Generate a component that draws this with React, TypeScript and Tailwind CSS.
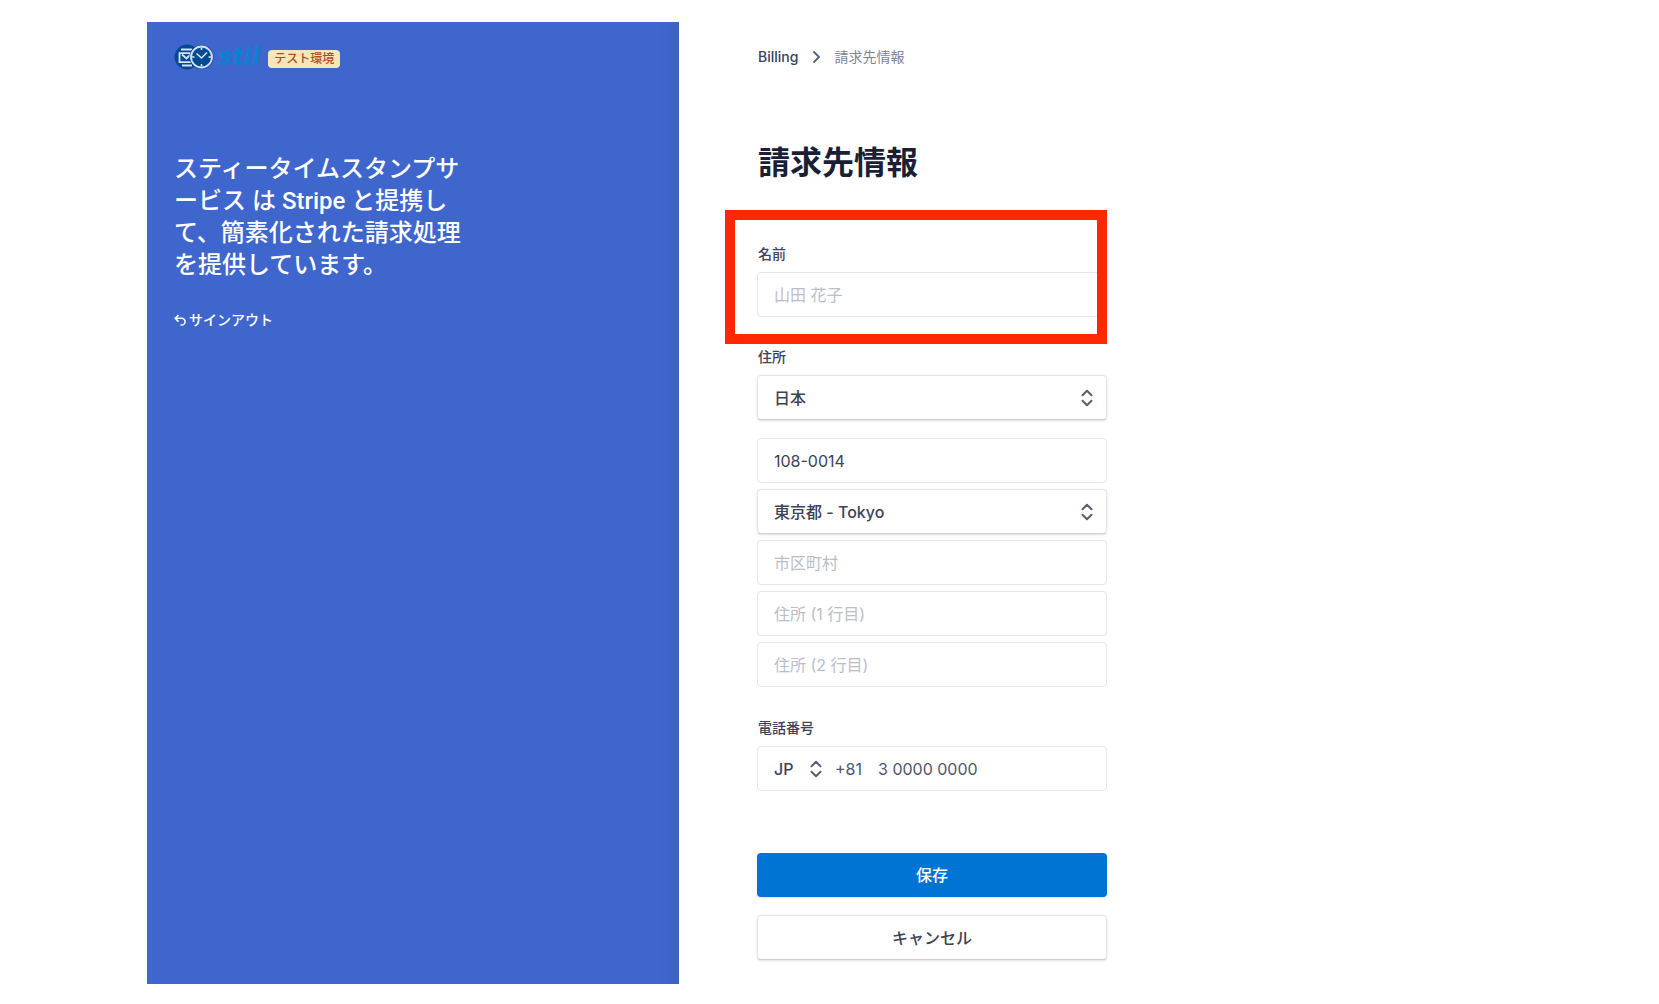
import * as React from "react"

const controlClass =
  "block h-[45px] w-full rounded border border-[#e6e6e6] bg-white px-4 text-base text-[#3c4257] outline-none placeholder:text-[#b9bec9]"
const labelClass = "block pl-px text-sm font-medium leading-5 text-[#3c4257]"

function ChevronUpDown({ className }: { className?: string }) {
  return (
    <svg
      className={className}
      width="12"
      height="18"
      viewBox="0 0 12 18"
      fill="none"
      stroke="#5a6073"
      strokeWidth={2}
      strokeLinecap="round"
      strokeLinejoin="round"
      aria-hidden="true"
    >
      <path d="M1.500 6.200L6 1.700l4.500 4.500M1.500 11.800L6 16.300l4.500-4.500" />
    </svg>
  )
}

function Logo() {
  return (
    <div className="flex items-center gap-1">
      <svg width="40" height="26" viewBox="0 0 40 26" fill="none" aria-hidden="true">
        <circle cx="13" cy="13" r="12.500" fill="#034a94" />
        <g stroke="#d6e2f2" strokeWidth={1.800}>
          <path d="M7 5.500h11M8 21.500h10" />
          <path d="M17 9.200H5.500v9H17" />
          <path d="M8 10.500l4.500 4 4.500-4.500" />
        </g>
        <circle cx="27.500" cy="13" r="12" fill="#034a94" />
        <circle cx="27.500" cy="13" r="10.500" stroke="#d6e2f2" strokeWidth={1.800} />
        <path
          d="M22.500 9.500l5 4.500 5.500-5.500M27.500 3.500v2.500M27.500 20v2.500M18 13h2.500M34.500 13h2.500"
          stroke="#d6e2f2"
          strokeWidth={1.600}
        />
      </svg>
      <span className="font-['DejaVu_Sans',sans-serif] text-2xl font-bold italic leading-6 text-[#0d80cf]">
        stii
      </span>
    </div>
  )
}

function SelectField({
  id,
  label,
  value,
}: {
  id: string
  label?: string
  value: string
}) {
  return (
    <div className="relative">
      <select
        id={id}
        aria-label={label}
        className={`${controlClass} appearance-none border-b-[#cfcfcf] font-medium shadow-sm`}
      >
        <option>{value}</option>
      </select>
      <ChevronUpDown className="pointer-events-none absolute right-[14px] top-[14px]" />
    </div>
  )
}

function Sidebar() {
  return (
    <aside className="bg-[#3f66cd] bg-[linear-gradient(to_left,#3b62c4,#3f66cd_20px)] px-[27px] pt-[22px] text-white">
      <div className="flex items-center gap-2">
        <Logo />
        <span className="mt-1 rounded bg-[#f8e5b9] px-1.5 text-xs font-medium leading-[18px] text-[#a8501e]">
          テスト環境
        </span>
      </div>
      <p className="mt-[83px] w-[290px] break-all font-['Roboto','Noto_Sans_CJK_JP',sans-serif] text-2xl font-medium leading-8">
        スティータイムスタンプサービス は Stripe と提携して、簡素化された請求処理を提供しています。
      </p>
      <a
        href="#signout"
        className="mt-[29px] flex items-center gap-[3px] text-sm font-medium leading-5"
      >
        <svg
          width="12"
          height="12"
          viewBox="0 0 12 12"
          fill="none"
          stroke="currentColor"
          strokeWidth={1.600}
          aria-hidden="true"
        >
          <path d="M4.500 1L1.200 4.300l3.300 3.300M1.200 4.300h6.500a3.300 3.300 0 0 1 0 6.700H6.500" />
        </svg>
        サインアウト
      </a>
    </aside>
  )
}

function BillingForm() {
  const [name, setName] = React.useState("")

  return (
    <form className="mt-[61px]" onSubmit={(e) => e.preventDefault()}>
      <div className="relative">
        <label htmlFor="name" className={labelClass}>
          名前
        </label>
        <input
          id="name"
          className={`${controlClass} mt-2`}
          placeholder="山田 花子"
          value={name}
          onChange={(e) => setName(e.target.value)}
        />
        <div className="pointer-events-none absolute -bottom-[27px] -left-8 -top-[34px] right-0 border-[10px] border-[#ff2800]" />
      </div>

      <label htmlFor="country" className={`${labelClass} mb-2 mt-[30px]`}>
        住所
      </label>
      <SelectField id="country" value="日本" />
      <div className="mt-[18px] flex flex-col gap-1.5">
        <input aria-label="郵便番号" className={controlClass} defaultValue="108-0014" />
        <SelectField id="prefecture" label="都道府県" value="東京都 - Tokyo" />
        <input aria-label="市区町村" className={controlClass} placeholder="市区町村" />
        <input aria-label="住所 1" className={controlClass} placeholder="住所 (1 行目)" />
        <input aria-label="住所 2" className={controlClass} placeholder="住所 (2 行目)" />
      </div>

      <label htmlFor="phone" className={`${labelClass} mb-2 mt-[31px]`}>
        電話番号
      </label>
      <div className="flex h-[45px] items-center rounded border border-[#e6e6e6] px-4 text-base text-[#3c4257]">
        <div className="relative">
          <select
            aria-label="国番号"
            className="w-12 appearance-none bg-transparent font-medium outline-none"
          >
            <option>JP</option>
          </select>
          <ChevronUpDown className="pointer-events-none absolute right-0 top-[3px]" />
        </div>
        <span className="ml-[13px] text-[#4f566b]">+81</span>
        <input
          id="phone"
          type="tel"
          className="ml-4 w-full min-w-0 text-[#4f566b] outline-none"
          defaultValue="3 0000 0000"
        />
      </div>

      <button
        type="submit"
        className="mt-[62px] block h-11 w-full rounded bg-[#0074d4] text-base font-medium text-white shadow-sm"
      >
        保存
      </button>
      <button
        type="button"
        className="mt-[18px] block h-[45px] w-full rounded border border-[#e6e6e6] border-b-[#cfcfcf] bg-white text-base font-medium text-[#3c4257] shadow-sm"
      >
        キャンセル
      </button>
    </form>
  )
}

export default function App() {
  return (
    <div className="grid min-h-screen grid-cols-[532fr_980fr] bg-white pb-5 pl-[147px] pt-[22px] font-['Inter','Noto_Sans_CJK_JP',sans-serif]">
      <Sidebar />
      <main className="pl-[78px] pr-6 pt-[25px]">
        <div className="max-w-[350px]">
          <nav className="flex items-center gap-[14px] pl-px text-sm leading-5">
            <a href="#billing" className="font-medium text-[#3c4257]">
              Billing
            </a>
            <svg
              width="8"
              height="12"
              viewBox="0 0 8 12"
              fill="none"
              stroke="#5a6073"
              strokeWidth={1.800}
              strokeLinecap="round"
              aria-hidden="true"
            >
              <path d="M2 1l5 5-5 5" />
            </svg>
            <span className="text-[#7c8498]">請求先情報</span>
          </nav>
          <h1 className="mt-[76px] pl-px text-[32px] font-bold leading-10 text-[#1a1f36]">
            請求先情報
          </h1>
          <BillingForm />
        </div>
      </main>
    </div>
  )
}
